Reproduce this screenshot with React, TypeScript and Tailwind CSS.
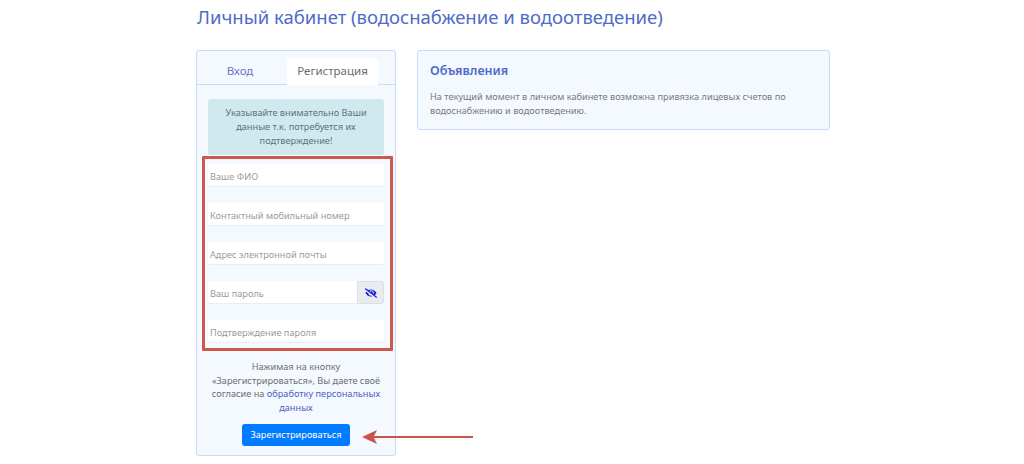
import { FaEyeSlash } from "react-icons/fa";

const fields = ["Ваше ФИО", "Контактный мобильный номер", "Адрес электронной почты"];

function Field({ label }: { label: string }) {
  return (
    <div className="h-[23px] w-full rounded-[2px] border-b border-[#e6edf5] bg-white pl-[2px] text-[9.2px] leading-[25px] text-[#9b9b9b]">
      {label}
    </div>
  );
}

export default function App() {
  return (
    <div
      className="relative h-[464px] w-[1024px] overflow-hidden bg-white"
      style={{ fontFamily: '"Noto Sans", "Open Sans", sans-serif' }}
    >
      <div className="pl-[196px] pt-[5px]">
        <h1 className="h-[45px] pl-px text-[18.5px] leading-[24px] text-[#4e6bc8]">
          Личный кабинет (водоснабжение и водоотведение)
        </h1>
        <div className="flex items-start gap-[21px]">
          {/* левая карточка */}
          <div className="h-[406px] w-[200px] rounded-[3px] border border-[#c9dafa] bg-[#f4f8ff]">
            <div className="flex h-[34px] items-end border-b border-[#c9dafa] pl-[12px]">
              <div className="mr-[16px] h-[26px] w-[62px] text-center text-[11.5px] leading-[26px] text-[#6a78c8]">
                Вход
              </div>
              <div className="-mb-px h-[27px] w-[91px] rounded-t-[3px] border-b border-white bg-white text-center text-[11.5px] leading-[26px] text-[#6b6b6b]">
                Регистрация
              </div>
            </div>
            <div className="px-[11px] pt-[14px]">
              <div className="h-[56px] rounded-[3px] bg-[#d0e9ee] px-2 pt-[7px] text-center text-[9.2px] leading-[14px] text-[#52767d]">
                Указывайте внимательно Ваши данные т.к. потребуется их подтверждение!
              </div>
              <div className="mt-[9px] flex flex-col gap-[16px]">
                {fields.map((f) => (
                  <Field key={f} label={f} />
                ))}
                <div className="flex h-[23px]">
                  <div className="h-full flex-1 rounded-l-[2px] border-b border-[#e6edf5] bg-white pl-[2px] text-[9.2px] leading-[25px] text-[#9b9b9b]">
                    Ваш пароль
                  </div>
                  <div className="flex h-full w-[27px] items-center justify-center rounded-r-[3px] border border-[#dcdfe4] bg-[#e9ecef]">
                    <FaEyeSlash size={12} className="text-[#1a1ae6]" />
                  </div>
                </div>
                <Field label="Подтверждение пароля" />
              </div>
              <p className="mt-[17px] text-center text-[9.2px] leading-[13.7px] text-[#6f6f6f]">
                Нажимая на кнопку «Зарегистрироваться», Вы даете своё согласие на{" "}
                <a className="text-[#4e62c4]">обработку персональных данных</a>
              </p>
              <button className="mx-auto mt-[9px] block h-[22px] w-[108px] rounded-[3px] bg-[#007bff] text-[9.2px] text-white">
                Зарегистрироваться
              </button>
            </div>
          </div>

          {/* объявления */}
          <div className="h-[80px] w-[413px] rounded-[3px] border border-[#c9dafa] bg-[#f4f8ff] px-[12px] pt-[11px]">
            <h2 className="text-[12.5px] leading-[18px] font-semibold text-[#4e6bc8]">Объявления</h2>
            <p className="mt-[10px] text-[9.2px] leading-[14px] text-[#7a7a7a]">
              На текущий момент в личном кабинете возможна привязка лицевых счетов по
              <br />
              водоснабжению и водоотведению.
            </p>
          </div>
        </div>
      </div>

      {/* аннотации поверх скриншота */}
      <div className="absolute left-[202px] top-[156px] h-[195px] w-[191px] rounded-[1px] border-[3px] border-[#d0574c]" />
      <svg className="absolute left-[360px] top-[428px]" width="116" height="18" viewBox="0 0 116 18">
        <path d="M2 9 L17 2 L14 8 L113 8 L113 10 L14 10 L17 16 Z" fill="#c9544a" />
      </svg>
    </div>
  );
}
